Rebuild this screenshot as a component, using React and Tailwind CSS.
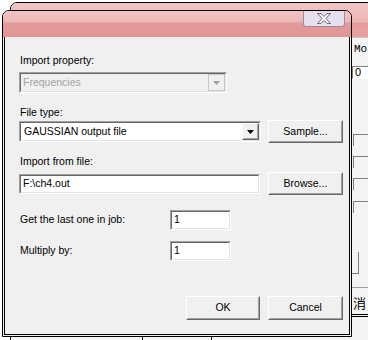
import React from "react";

const font = { fontFamily: '"Liberation Sans", Arial, sans-serif' };

function Sunken({ className = "", children, disabled }) {
  return (
    <div
      className={`border border-t-[#a0a0a0] border-l-[#a0a0a0] border-b-white border-r-white ${className}`}
    >
      <div
        className={`h-full w-full border border-t-[#696969] border-l-[#696969] border-b-[#e3e3e3] border-r-[#e3e3e3] ${disabled ? "bg-[#f0f0f0]" : "bg-white"} flex items-center`}
      >
        {children}
      </div>
    </div>
  );
}

function Raised({ className = "", children }) {
  return (
    <div
      className={`border border-t-white border-l-white border-b-[#696969] border-r-[#696969] bg-[#f0f0f0] ${className}`}
    >
      <div className="h-full w-full border border-t-[#f0f0f0] border-l-[#f0f0f0] border-b-[#a0a0a0] border-r-[#a0a0a0] flex items-center justify-center">
        {children}
      </div>
    </div>
  );
}

function Arrow({ color = "#000" }) {
  return (
    <svg width="7" height="4" viewBox="0 0 7 4">
      <path d="M0 0H7L3.5 4Z" fill={color} />
    </svg>
  );
}

export default function App() {
  return (
    <div
      className="relative w-[368px] h-[340px] overflow-hidden bg-white text-[10.5px] text-black"
      style={font}
    >
      {/* background window */}
      <div className="absolute left-[10px] top-[2px] w-[400px] h-[360px] border border-black rounded-tl-[7px] bg-[#f4f4f4] overflow-hidden">
        <div className="h-[35px] bg-[linear-gradient(#f2c6c6_0%,#eeb6b6_55%,#e59c9c_60%,#e6a3a3_100%)] border-b border-[#c9c9c9]" />
        <div className="relative">
          <div
            className="absolute left-[343px] top-[3px] text-[11px]"
            style={{ fontFamily: '"Liberation Mono", monospace' }}
          >
            Mo
          </div>
          <div className="absolute left-[341px] top-[28px] w-[40px] h-[13px] border border-t-[#808080] border-l-[#808080] border-b-white border-r-white bg-white text-[11px] leading-[11px] pl-[2px]">
            0
          </div>
          <div className="absolute left-[342px] top-[96px] w-[40px] h-[12px] border-t border-l border-[#808080]" />
          <div className="absolute left-[342px] top-[118px] w-[40px] h-[12px] border-t border-l border-[#808080]" />
          <div className="absolute left-[342px] top-[140px] w-[40px] h-[12px] border-t border-l border-[#808080]" />
          <div className="absolute left-[342px] top-[163px] w-[40px] h-[12px] border-t border-l border-[#808080]" />
          <div className="absolute left-[330px] top-[214px] w-[18px] h-[22px] border-r border-b border-[#808080]" />
          <div className="absolute left-[340px] top-[249px] w-[40px] border-t border-[#a0a0a0]" />
          <div
            className="absolute left-[342px] top-[258px] text-[13px] leading-[14px]"
            style={{ fontFamily: '"Noto Sans CJK SC", sans-serif' }}
          >
            消
          </div>
          <div className="absolute left-[340px] top-[276px] w-[40px] border-t border-b h-[3px] border-black" />
        </div>
      </div>
      {/* below dialog marks */}
      <div className="absolute left-[142px] top-[337px] w-[70px] h-[6px] border-l border-r border-black" />

      {/* front dialog */}
      <div className="absolute left-[2px] top-[10px] w-[350px] h-[327px] border border-black rounded-t-[7px] bg-[#f0f0f0] flex flex-col overflow-hidden">
        <div className="relative h-[26px] shrink-0 bg-[linear-gradient(#f2c4c4_0%,#eeb8b8_40%,#e49a9a_48%,#e29595_100%)]">
          <div className="absolute right-[6px] top-0 w-[42px] h-[16px] bg-[#e8dfee] border border-t-0 border-[#9c8c9c] rounded-b-[3px] flex items-center justify-center">
            <svg width="16" height="11" viewBox="0 0 16 11">
              <path
                d="M1.5 0.5H5L8 3.5L11 0.5H14.5L10 5.5L14.5 10.5H11L8 7.5L5 10.5H1.5L6 5.5Z"
                fill="#fafafa"
                stroke="#6c6470"
                strokeWidth="1"
                strokeLinejoin="round"
              />
            </svg>
          </div>
        </div>
        <div className="flex-1 mx-[1px] mb-[1px] border border-t-0 border-black bg-[#f0f0f0] pl-[14px] pr-[5px] pt-[17px] flex flex-col">
          <div className="h-[13px] leading-[13px] pl-[1px]">Import property:</div>
          <Sunken disabled className="mt-[5px] w-[208px] h-[21px]">
            <span className="flex-1 pl-[2px] text-[#a3a3a3]">Frequencies</span>
            <div className="w-[17px] h-[17px] mr-[0px] border border-[#c8c8c8] flex items-center justify-center">
              <Arrow color="#a0a0a0" />
            </div>
          </Sunken>

          <div className="mt-[13px] h-[13px] leading-[13px] pl-[1px]">File type:</div>
          <div className="mt-[1px] h-[23px] flex items-center">
            <Sunken className="w-[242px] h-[21px]">
              <span className="flex-1 pl-[3px]">GAUSSIAN output file</span>
              <Raised className="w-[17px] h-[17px]">
                <Arrow />
              </Raised>
            </Sunken>
            <Raised className="ml-[7px] w-[75px] h-[23px]">Sample...</Raised>
          </div>

          <div className="mt-[12px] h-[13px] leading-[13px] pl-[1px]">Import from file:</div>
          <div className="mt-[4px] h-[23px] flex items-center">
            <Sunken className="w-[241px] h-[20px]">
              <span className="pl-[2px]">F:\ch4.out</span>
            </Sunken>
            <Raised className="ml-[8px] w-[75px] h-[23px]">Browse...</Raised>
          </div>

          <div className="mt-[15px] h-[20px] flex items-center">
            <span className="w-[151px] pl-[1px]">Get the last one in job:</span>
            <Sunken className="w-[61px] h-[20px]">
              <span className="pl-[2px]">1</span>
            </Sunken>
          </div>
          <div className="mt-[11px] h-[20px] flex items-center">
            <span className="w-[151px] pl-[1px]">Multiply by:</span>
            <Sunken className="w-[61px] h-[20px]">
              <span className="pl-[2px]">1</span>
            </Sunken>
          </div>

          <div className="mt-[35px] flex justify-end gap-[8px] pr-[1px]">
            <Raised className="w-[74px] h-[24px]">OK</Raised>
            <Raised className="w-[75px] h-[24px]">Cancel</Raised>
          </div>
        </div>
      </div>
    </div>
  );
}
